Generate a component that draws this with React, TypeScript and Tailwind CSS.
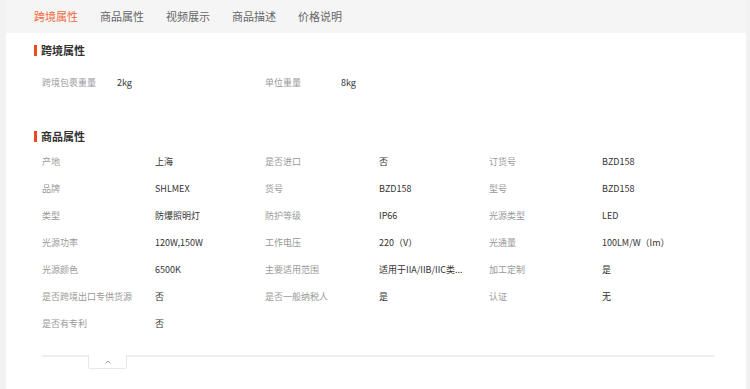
const tabs = ['跨境属性', '商品属性', '视频展示', '商品描述', '价格说明']

const crossRows: [string, string][] = [
  ['跨境包裹重量', '2kg'],
  ['单位重量', '8kg'],
]

const attrs: [string, string][] = [
  ['产地', '上海'],
  ['是否进口', '否'],
  ['订货号', 'BZD158'],
  ['品牌', 'SHLMEX'],
  ['货号', 'BZD158'],
  ['型号', 'BZD158'],
  ['类型', '防爆照明灯'],
  ['防护等级', 'IP66'],
  ['光源类型', 'LED'],
  ['光源功率', '120W,150W'],
  ['工作电压', '220（V）'],
  ['光通量', '100LM/W（lm）'],
  ['光源颜色', '6500K'],
  ['主要适用范围', '适用于IIA/IIB/IIC类...'],
  ['加工定制', '是'],
  ['是否跨境出口专供货源', '否'],
  ['是否一般纳税人', '是'],
  ['认证', '无'],
  ['是否有专利', '否'],
]

function Heading({ title }: { title: string }) {
  return (
    <div className="flex items-center h-[16px]">
      <span className="w-[3px] h-[11px] bg-[#f04a1c] mr-[4px]" />
      <span className="text-[11px] font-bold text-[#333]">{title}</span>
    </div>
  )
}

export default function App() {
  return (
    <div
      className="w-[750px] h-[389px] flex bg-[#f5f5f5] overflow-hidden"
      style={{ fontFamily: '"Noto Sans CJK SC", "Noto Sans", sans-serif' }}
    >
      <div className="w-[6px] bg-[#f2f2f2]" />
      <div className="w-[740px] flex flex-col">
        <div className="h-[33px] flex items-center gap-[22px] pl-[28px] text-[11px] text-[#666]">
          {tabs.map((t, i) => (
            <span key={t} className={i === 0 ? 'text-[#f2683c]' : ''}>
              {t}
            </span>
          ))}
        </div>
        <div className="flex-1 bg-white pt-[9px] pl-[28px]">
          <Heading title="跨境属性" />
          <div className="mt-[11px] pl-[8px] grid grid-cols-[75px_148px_76px_1fr] text-[9px]">
            {crossRows.map(([k, v]) => (
              <div key={k} className="contents">
                <div className="h-[27px] flex items-center text-[#999]">{k}</div>
                <div className="h-[27px] flex items-center text-[#333]">{v}</div>
              </div>
            ))}
          </div>
          <div className="mt-[32px]">
            <Heading title="商品属性" />
          </div>
          <div className="mt-[4px] pl-[8px] grid grid-cols-[113px_110px_114px_110px_113px_1fr] text-[9px]">
            {attrs.map(([k, v]) => (
              <div key={k} className="contents">
                <div className="h-[27px] flex items-center text-[#999]">{k}</div>
                <div className="h-[27px] flex items-center text-[#333] whitespace-nowrap">{v}</div>
              </div>
            ))}
          </div>
          <div className="mt-[18px] ml-[8px] w-[672px] flex">
            <div className="w-[46px] border-t-2 border-[#eeeeee]" />
            <div className="w-[39px] h-[14px] border-x border-b border-[#e8e8e8] rounded-b-[2px] flex items-center justify-center">
              <svg width="6" height="4" viewBox="0 0 6 4" fill="none">
                <path d="M0.5 3.5 L3 1 L5.5 3.5" stroke="#999" strokeWidth="0.9" />
              </svg>
            </div>
            <div className="flex-1 border-t-2 border-[#eeeeee]" />
          </div>
        </div>
      </div>
      <div className="flex-1 bg-[#f2f2f2]" />
    </div>
  )
}
